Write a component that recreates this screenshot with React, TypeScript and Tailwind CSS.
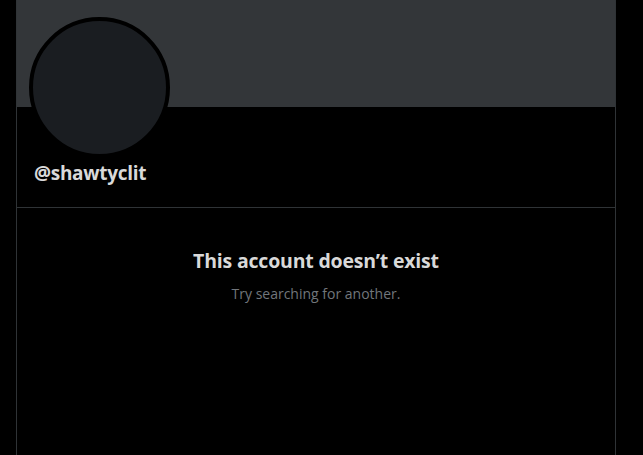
export default function App() {
  return (
    <div className="min-h-[455px] bg-black font-['Open_Sans',sans-serif]">
      <div className="ml-4 w-[600px] min-h-[455px] border-x border-[#2f3336]">
        {/* Banner */}
        <div className="h-[107px] bg-[#333639]" />

        {/* Profile header */}
        <div className="border-b border-[#2f3336] pb-[22px] pl-3">
          <div className="mt-[-90px] h-[141px] w-[141px] rounded-full border-4 border-black bg-[#1a1d21]" />
          <div className="mt-[3px] pl-[5px] text-[19px] font-bold leading-6 tracking-[-0.3px] text-[#d9d9d9]">
            @shawtyclit
          </div>
        </div>

        {/* Empty state */}
        <div className="flex flex-col items-center pt-[41px]">
          <div className="text-[19.5px] font-bold leading-6 tracking-[-0.2px] text-[#d9d9d9]">
            This account doesn’t exist
          </div>
          <div className="mt-[11px] text-[14px] leading-5 text-[#71767b]">
            Try searching for another.
          </div>
        </div>
      </div>
    </div>
  );
}
